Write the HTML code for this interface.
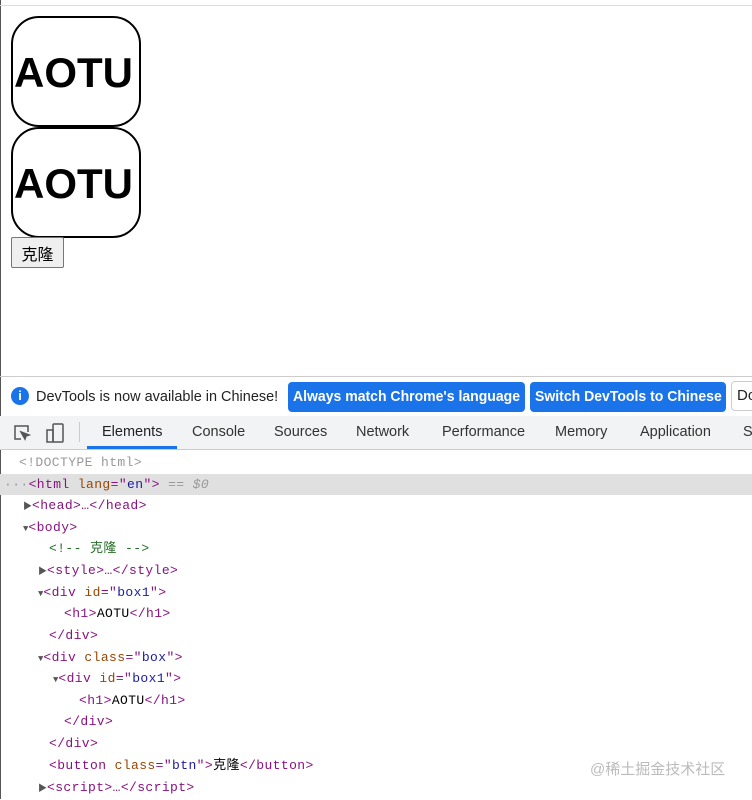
<!DOCTYPE html>
<html><head><meta charset="utf-8"><style>
body{margin:0;width:752px;height:799px;overflow:hidden;background:#fff;position:relative;font-family:"Liberation Sans","Noto Sans CJK SC",sans-serif}
.lb{position:absolute;left:0;top:0;width:1px;height:799px;background:#555}
.tl{position:absolute;left:0;top:5px;width:752px;height:1px;background:#ddd}
.box{position:absolute;left:11px;width:125px;height:107px;border:2px solid #000;border-radius:28px;font-weight:bold;font-size:42px;line-height:110px;padding-left:1px;white-space:nowrap;overflow:visible}
.btn{position:absolute;left:11px;top:237px;width:51px;height:29px;border:1px solid #767676;border-radius:2px;background:#efefef;font-size:16px;display:flex;align-items:center;justify-content:center}
.info{position:absolute;left:0;top:376px;width:752px;height:39px;border-top:1px solid #ccc;border-bottom:1px solid #ccc;font-size:15px;color:#222}
.info .i{position:absolute;left:11px;top:10px;width:18px;height:18px;border-radius:50%;background:#1a73e8;color:#fff;font-size:13px;font-weight:bold;text-align:center;line-height:18px}
.sq{display:inline-block;transform-origin:0 50%;white-space:nowrap}
.info .t{position:absolute;left:36px;top:11px}
.b{position:absolute;top:5px;height:30px;background:#1a73e8;color:#fff;border-radius:4px;font-weight:bold;font-size:15px;line-height:30px;overflow:hidden}
.b .sq{margin-left:5px}
.tabs{position:absolute;left:0;top:416px;width:752px;height:33px;background:#f1f3f4;border-bottom:1px solid #ccc;font-size:14.5px;color:#333}
.tabs span{position:absolute;top:8px}
.code{position:absolute;left:0;top:452px;width:752px;font-family:"Liberation Mono","Noto Sans CJK SC",monospace;font-size:13px;letter-spacing:0.4px}
.r{position:absolute;height:21px;line-height:21px;white-space:pre;color:#881280}
.at{color:#994500}.v{color:#1a1aa6}.tx{color:#000}.c{color:#236e25}.g{color:#999}
.ar{font-size:9px;color:#555;letter-spacing:0}
</style></head><body>
<div class="lb"></div><div class="tl"></div>
<div class="box" style="top:16px">AOTU</div>
<div class="box" style="top:127px">AOTU</div>
<div class="btn">克隆</div>
<div class="info"><div class="i">i</div><div class="t"><span class="sq" style="transform:scaleX(0.965)">DevTools is now available in Chinese!</span></div>
<div class="b" style="left:288px;width:237px"><span class="sq" style="transform:scaleX(0.935)">Always match Chrome's language</span></div>
<div class="b" style="left:530px;width:196px"><span class="sq" style="transform:scaleX(0.935)">Switch DevTools to Chinese</span></div>
<div style="position:absolute;left:731px;top:4px;width:30px;height:28px;border:1px solid #ccc;border-radius:4px;line-height:28px;padding-left:5px">Do</div></div>
<div class="tabs">
<svg style="position:absolute;left:12px;top:7px" width="20" height="20" viewBox="0 0 20 20" fill="none" stroke="#555" stroke-width="1.5"><path d="M9 16H3V3h13v6"/><path d="M9 9l8 3-3 1-1 3z" fill="#555"/></svg>
<svg style="position:absolute;left:44px;top:6px" width="22" height="22" viewBox="0 0 22 22" fill="none" stroke="#555" stroke-width="1.5"><rect x="9" y="2" width="10" height="18" rx="1"/><rect x="3" y="8" width="6" height="12"/></svg>
<div style="position:absolute;left:79px;top:6px;width:1px;height:20px;background:#ccc"></div>
<span style="left:102px;color:#222">Elements</span>
<div style="position:absolute;left:87px;top:30px;width:90px;height:3px;background:#1a73e8"></div>
<span style="left:192px">Console</span><span style="left:274px">Sources</span><span style="left:356px">Network</span><span style="left:442px">Performance</span><span style="left:555px">Memory</span><span style="left:640px">Application</span><span style="left:743px">S</span>
</div>
<div class="code">
<div class="r g" style="top:0;left:19px">&lt;!DOCTYPE html&gt;</div>
<div style="position:absolute;top:22px;left:0;width:752px;height:21px;background:#e0e0e0"></div>
<div class="r" style="top:22px;left:4px"><span class="g">···</span>&lt;html <span class="at">lang</span>="<span class="v">en</span>"&gt; <span class="g" style="font-style:italic">== $0</span></div>
<div class="r" style="top:43px;left:23px"><span class="ar">▶</span>&lt;head&gt;…&lt;/head&gt;</div>
<div class="r" style="top:65px;left:23px"><span class="ar">▼</span>&lt;body&gt;</div>
<div class="r c" style="top:86px;left:49px">&lt;!-- 克隆 --&gt;</div>
<div class="r" style="top:108px;left:38px"><span class="ar">▶</span>&lt;style&gt;…&lt;/style&gt;</div>
<div class="r" style="top:130px;left:38px"><span class="ar">▼</span>&lt;div <span class="at">id</span>="<span class="v">box1</span>"&gt;</div>
<div class="r" style="top:151px;left:64px">&lt;h1&gt;<span class="tx">AOTU</span>&lt;/h1&gt;</div>
<div class="r" style="top:173px;left:49px">&lt;/div&gt;</div>
<div class="r" style="top:195px;left:38px"><span class="ar">▼</span>&lt;div <span class="at">class</span>="<span class="v">box</span>"&gt;</div>
<div class="r" style="top:216px;left:53px"><span class="ar">▼</span>&lt;div <span class="at">id</span>="<span class="v">box1</span>"&gt;</div>
<div class="r" style="top:238px;left:79px">&lt;h1&gt;<span class="tx">AOTU</span>&lt;/h1&gt;</div>
<div class="r" style="top:259px;left:64px">&lt;/div&gt;</div>
<div class="r" style="top:281px;left:49px">&lt;/div&gt;</div>
<div class="r" style="top:303px;left:49px">&lt;button <span class="at">class</span>="<span class="v">btn</span>"&gt;<span class="tx">克隆</span>&lt;/button&gt;</div>
<div class="r" style="top:325px;left:38px"><span class="ar">▶</span>&lt;script&gt;…&lt;/script&gt;</div>
</div>
<div style="position:absolute;left:590px;top:758px;font-size:15px;color:#bbb">@稀土掘金技术社区</div>
</body></html>
